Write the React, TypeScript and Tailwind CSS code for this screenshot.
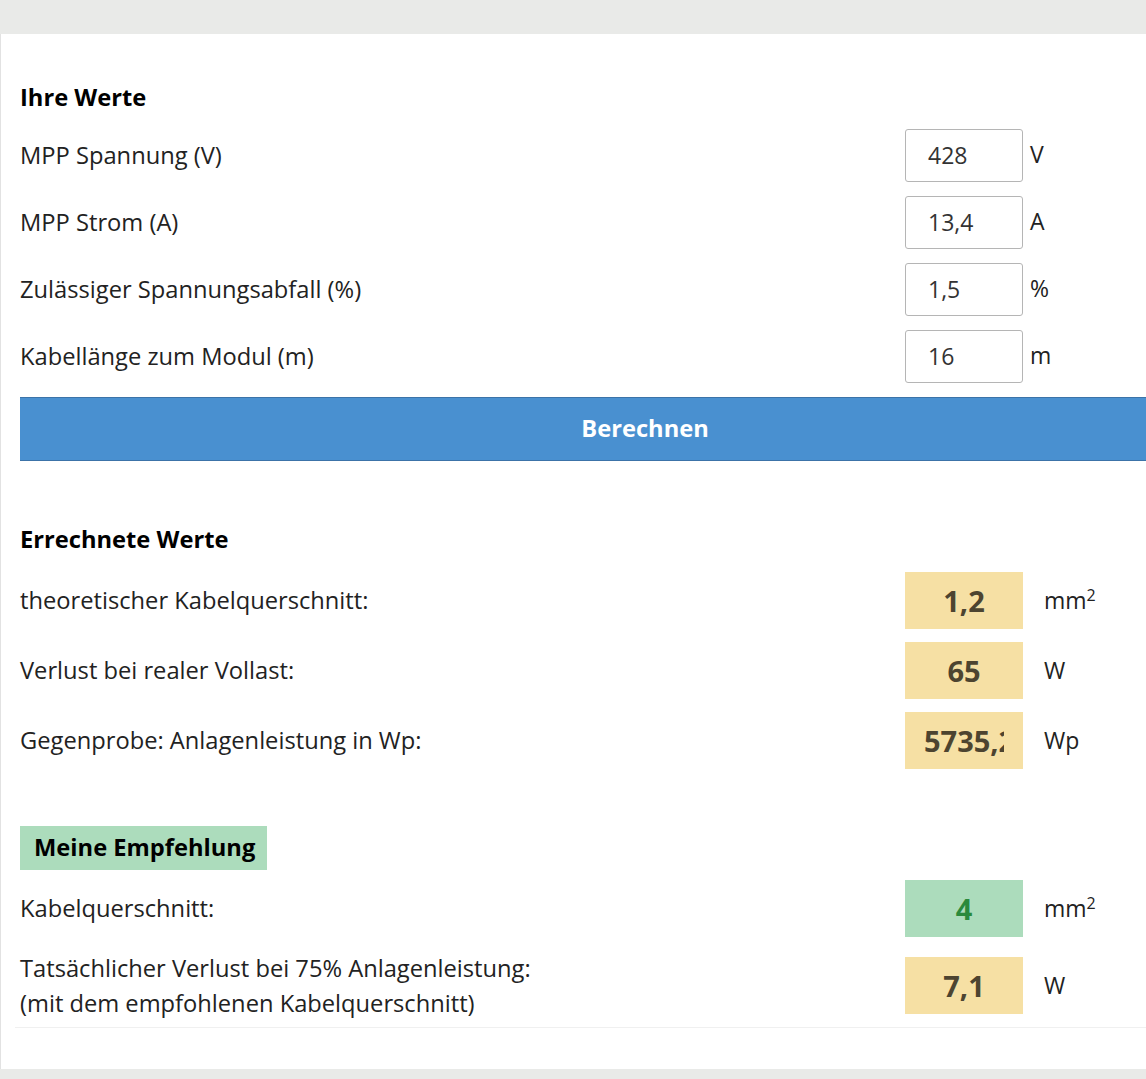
import React from "react";

const font = { fontFamily: '"Open Sans", "Liberation Sans", sans-serif' };

const InputRow: React.FC<{ label: string; value: string; unit: string }> = ({
  label,
  value,
  unit,
}) => (
  <div className="flex items-center h-[53px]">
    <div className="w-[885px] text-[23.7px] text-[#222]">{label}</div>
    <div className="w-[118px] h-[53px] border border-[#b5b5b5] rounded-[3px] bg-white flex items-center pl-[22px] text-[23px] text-[#333]">
      {value}
    </div>
    <div className="ml-[7px] self-start pt-[8px] text-[23px] text-[#222]">
      {unit}
    </div>
  </div>
);

const ResultRow: React.FC<{
  label: React.ReactNode;
  value: string;
  unit: React.ReactNode;
  green?: boolean;
}> = ({ label, value, unit, green }) => (
  <div className="flex items-center h-[57px]">
    <div className="w-[885px] text-[23.7px] text-[#222] leading-[35px]">
      {label}
    </div>
    <div
      className={
        green
          ? "w-[118px] h-[57px] bg-[#acdcbc] px-[19px] text-[29px] font-bold text-[#2a8a3c]"
          : "w-[118px] h-[57px] bg-[#f6e0a4] px-[19px] text-[29px] font-bold text-[#4d4430]"
      }
    >
      <div className="overflow-hidden whitespace-nowrap text-center leading-[57px]">
        {value}
      </div>
    </div>
    <div className="ml-[21px] text-[23px] text-[#222]">{unit}</div>
  </div>
);

const Mm2 = () => (
  <span>
    mm<sup className="text-[16px]">2</sup>
  </span>
);

export default function App() {
  return (
    <div
      className="w-[1146px] h-[1079px] bg-[#e9eae8] pt-[34px] overflow-hidden"
      style={font}
    >
      <div className="w-[1300px] h-[1035px] bg-white border-l border-[#e2e2e2] pl-[19px]">
        <div className="w-[1250px]">
          <h2 className="pt-[48px] h-[95px] text-[23.7px] font-bold text-black leading-[30px]">
            Ihre Werte
          </h2>
          <div className="flex flex-col gap-[14px]">
            <InputRow label="MPP Spannung (V)" value="428" unit="V" />
            <InputRow label="MPP Strom (A)" value="13,4" unit="A" />
            <InputRow label="Zulässiger Spannungsabfall (%)" value="1,5" unit="%" />
            <InputRow label="Kabellänge zum Modul (m)" value="16" unit="m" />
          </div>
          <button className="mt-[14px] w-full h-[64px] bg-[#4990d0] border-y border-[#3c73a8] text-white text-[23.7px] font-bold flex items-center justify-center">
            Berechnen
          </button>
          <h2 className="mt-[63px] h-[48px] text-[23.7px] font-bold text-black leading-[30px]">
            Errechnete Werte
          </h2>
          <div className="flex flex-col gap-[13px]">
            <ResultRow label="theoretischer Kabelquerschnitt:" value="1,2" unit={<Mm2 />} />
            <ResultRow label="Verlust bei realer Vollast:" value="65" unit="W" />
            <ResultRow label="Gegenprobe: Anlagenleistung in Wp:" value="5735,2" unit="Wp" />
          </div>
          <div className="mt-[57px] w-[247px] h-[44px] bg-[#acdcbc] flex items-center pl-[14px] text-[23.7px] font-bold text-black">
            Meine Empfehlung
          </div>
          <div className="mt-[10px] flex flex-col gap-[20px]">
            <ResultRow label="Kabelquerschnitt:" value="4" unit={<Mm2 />} green />
            <ResultRow
              label={
                <>
                  Tatsächlicher Verlust bei 75% Anlagenleistung:
                  <br />
                  (mit dem empfohlenen Kabelquerschnitt)
                </>
              }
              value="7,1"
              unit="W"
            />
          </div>
          <div className="mt-[13px] -ml-[5px] h-px bg-[#f0f0f0]" />
        </div>
      </div>
    </div>
  );
}
